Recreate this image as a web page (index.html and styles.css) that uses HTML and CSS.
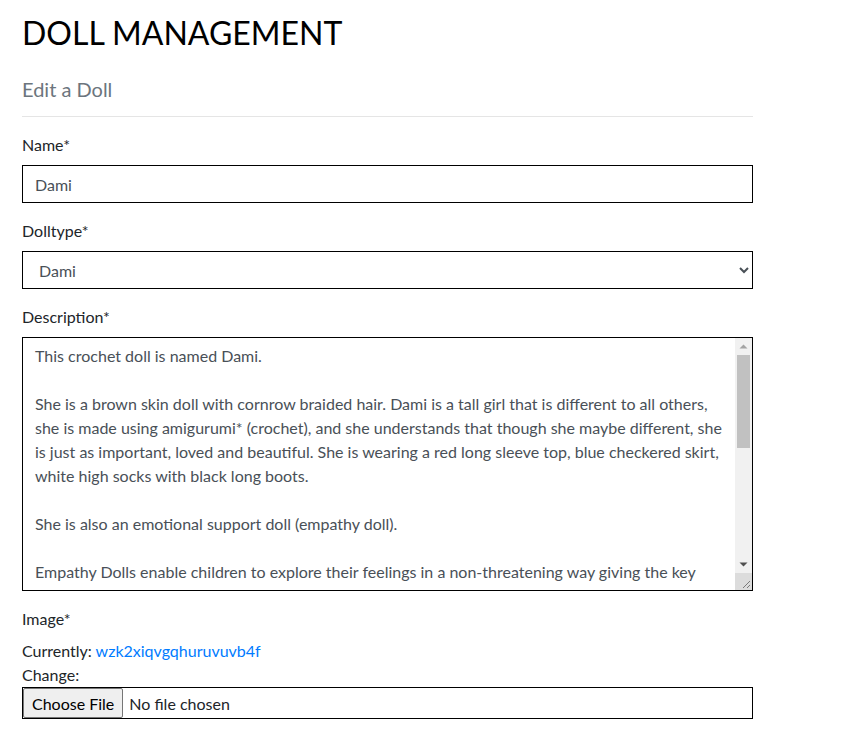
FILE: index.html
```html
<!DOCTYPE html>
<html lang="en">
<head>
<meta charset="utf-8">
<title>Doll Management</title>
<link rel="stylesheet" href="styles.css">
</head>
<body>
<main class="page">
  <h1 class="title">DOLL MANAGEMENT</h1>
  <h2 class="subtitle">Edit a Doll</h2>
  <hr class="divider">
  <form class="form">
    <div class="group">
      <label class="label" for="name">Name*</label>
      <input class="control" id="name" type="text" value="Dami">
    </div>
    <div class="group">
      <label class="label" for="dolltype">Dolltype*</label>
      <select class="control select" id="dolltype">
        <option selected>Dami</option>
      </select>
    </div>
    <div class="group">
      <label class="label" for="desc">Description*</label>
      <div class="textbox">
        <textarea class="textarea" id="desc" rows="10">This crochet doll is named Dami.

She is a brown skin doll with cornrow braided hair. Dami is a tall girl that is different to all others, she is made using amigurumi* (crochet), and she understands that though she maybe different, she is just as important, loved and beautiful. She is wearing a red long sleeve top, blue checkered skirt, white high socks with black long boots.

She is also an emotional support doll (empathy doll).

Empathy Dolls enable children to explore their feelings in a non-threatening way giving the key opportunity to talk about how they feel, and to develop empathy and understanding towards others.

*Amigurumi is the Japanese art of knitting or crocheting small, stuffed yarn creatures.</textarea>
        <div class="scrollbar" aria-hidden="true">
          <div class="sb-btn">
            <svg width="17" height="17" viewBox="0 0 17 17"><path d="M4.5 10.5 L8.5 6.5 L12.5 10.5 Z" fill="#a3a3a3"/></svg>
          </div>
          <div class="sb-track"><div class="sb-thumb"></div></div>
          <div class="sb-btn">
            <svg width="17" height="17" viewBox="0 0 17 17"><path d="M4.5 6.5 L8.5 10.5 L12.5 6.5 Z" fill="#505050"/></svg>
          </div>
          <div class="sb-corner">
            <svg width="17" height="17" viewBox="0 0 17 17"><path d="M15 8 L8 15 M15 12 L12 15" stroke="#7a7a7a" stroke-width="1"/></svg>
          </div>
        </div>
      </div>
    </div>
    <div class="group">
      <label class="label" for="image">Image*</label>
      <div class="current">Currently: <a class="link" href="#">wzk2xiqvgqhuruvuvb4f</a></div>
      <div class="current">Change:</div>
      <input class="file" id="image" type="file">
    </div>
    <div class="group">
      <label class="label" for="price">Price*</label>
    </div>
  </form>
</main>
</body>
</html>
```

FILE: styles.css
```css
html, body {
  margin: 0;
  padding: 0;
  background: #fff;
}
body {
  font-family: Lato, "Open Sans", sans-serif;
  font-size: 16px;
  line-height: 1.5;
  color: #212529;
}
.page {
  width: 731px;
  padding: 14px 22px 0;
}
.title {
  font-size: 32px;
  font-weight: 400;
  line-height: 1.2;
  margin: 0 0 25px;
  color: #000;
}
.subtitle {
  font-size: 20px;
  font-weight: 400;
  line-height: 1.2;
  margin: 0;
  color: #6c757d;
}
.divider {
  margin: 15px 0 16px;
  border: 0;
  border-top: 1px solid rgba(0,0,0,.1);
}
.form {
  margin: 0;
}
.group {
  margin-bottom: 16px;
}
.label {
  display: inline-block;
  margin-bottom: 8px;
}
.control {
  display: block;
  box-sizing: border-box;
  width: 100%;
  height: 38px;
  padding: 6px 12px;
  font-family: inherit;
  font-size: 16px;
  line-height: 1.5;
  color: #495057;
  background: #fff;
  border: 1px solid #000;
  border-radius: 0;
  margin: 0;
}
.textbox {
  display: flex;
  box-sizing: border-box;
  width: 100%;
  height: 254px;
  border: 1px solid #000;
  background: #fff;
}
.textarea {
  flex: 1;
  min-width: 0;
  box-sizing: border-box;
  height: 100%;
  margin: 0;
  padding: 6px 12px;
  border: 0;
  outline: none;
  resize: none;
  overflow: hidden;
  font-family: inherit;
  font-size: 16px;
  line-height: 1.5;
  color: #495057;
  background: #fff;
}
.scrollbar {
  width: 17px;
  flex: none;
  display: flex;
  flex-direction: column;
  background: #f1f1f1;
}
.sb-btn {
  height: 17px;
  flex: none;
}
.sb-btn svg, .sb-corner svg {
  display: block;
}
.sb-track {
  flex: 1;
  padding: 0 2px;
}
.sb-thumb {
  height: 93px;
  background: #c1c1c1;
}
.sb-corner {
  height: 17px;
  flex: none;
  background: #dcdcdc;
}
.current {
  line-height: 24px;
}
.link {
  color: #007bff;
  text-decoration: none;
}
.file {
  display: block;
  box-sizing: border-box;
  width: 100%;
  height: 32px;
  border: 1px solid #000;
  font-family: inherit;
  font-size: 16px;
  color: #212529;
  margin: 0;
  padding: 0;
}
.file::file-selector-button {
  height: 30px;
  margin: 0 6px 0 0;
  padding: 0 8px;
  border: 1px solid #767676;
  border-radius: 2px;
  background: #efefef;
  color: #000;
  font-family: inherit;
  font-size: 16px;
}
```
